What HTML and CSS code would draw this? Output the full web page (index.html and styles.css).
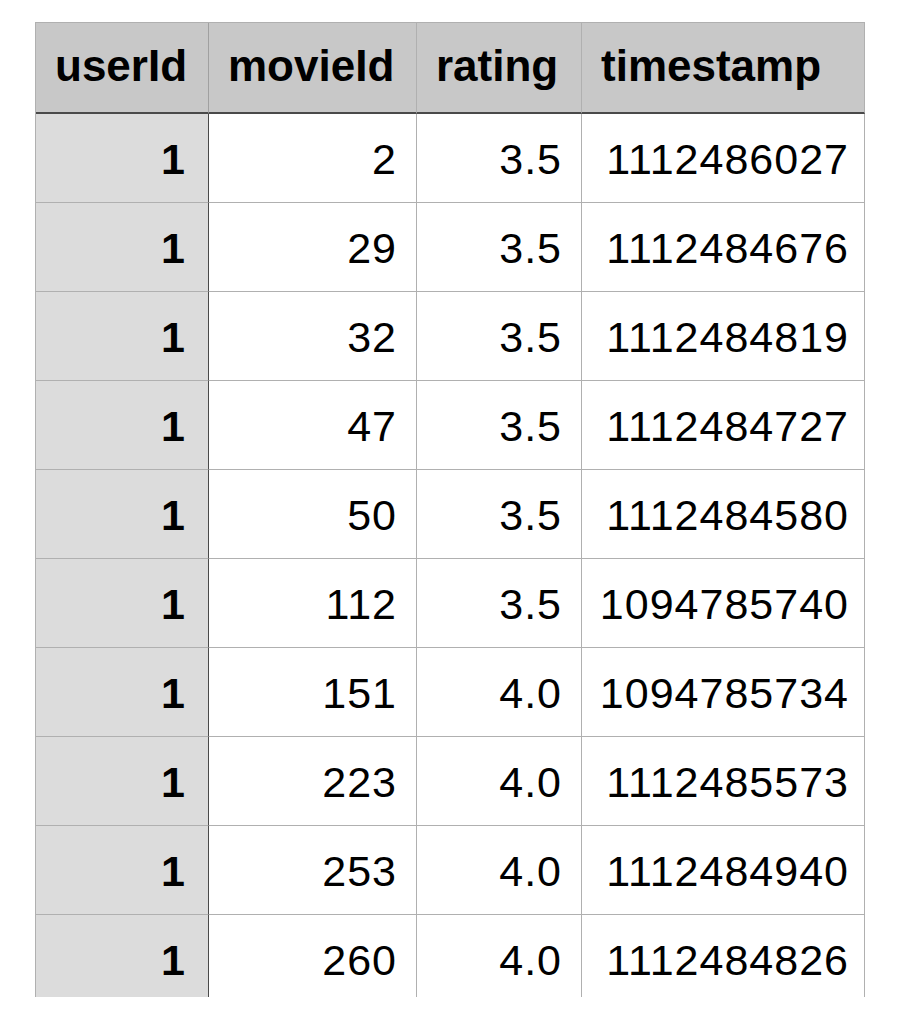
FILE: index.html
```html
<!DOCTYPE html>
<html>
<head>
<meta charset="utf-8">
<link rel="stylesheet" href="styles.css">
</head>
<body>
<div class="frame">
  <div class="grid">
    <div class="cell head key">userId</div>
    <div class="cell head">movieId</div>
    <div class="cell head">rating</div>
    <div class="cell head last">timestamp</div>

    <div class="cell key">1</div><div class="cell">2</div><div class="cell">3.5</div><div class="cell last">1112486027</div>
    <div class="cell key">1</div><div class="cell">29</div><div class="cell">3.5</div><div class="cell last">1112484676</div>
    <div class="cell key">1</div><div class="cell">32</div><div class="cell">3.5</div><div class="cell last">1112484819</div>
    <div class="cell key">1</div><div class="cell">47</div><div class="cell">3.5</div><div class="cell last">1112484727</div>
    <div class="cell key">1</div><div class="cell">50</div><div class="cell">3.5</div><div class="cell last">1112484580</div>
    <div class="cell key">1</div><div class="cell">112</div><div class="cell">3.5</div><div class="cell last">1094785740</div>
    <div class="cell key">1</div><div class="cell">151</div><div class="cell">4.0</div><div class="cell last">1094785734</div>
    <div class="cell key">1</div><div class="cell">223</div><div class="cell">4.0</div><div class="cell last">1112485573</div>
    <div class="cell key">1</div><div class="cell">253</div><div class="cell">4.0</div><div class="cell last">1112484940</div>
    <div class="cell key">1</div><div class="cell">260</div><div class="cell">4.0</div><div class="cell last">1112484826</div>
  </div>
</div>
</body>
</html>
```
FILE: styles.css
```css
html, body {
  margin: 0;
  padding: 0;
  background: #ffffff;
}
body {
  padding: 22px 0 0 35px;
  font-family: "Liberation Sans", Arial, sans-serif;
  color: #000;
}
.frame {
  width: 830px;
  height: 975px;
  overflow: hidden;
}
.grid {
  display: grid;
  grid-template-columns: 173px 208px 165px 283px;
  grid-template-rows: 91px;
  grid-auto-rows: 89px;
  border-left: 1px solid #b0b0b0;
  border-top: 1px solid #b0b0b0;
  width: 829px;
}
.cell {
  box-sizing: border-box;
  border-right: 1px solid #b0b0b0;
  border-bottom: 1px solid #b0b0b0;
  font-size: 43px;
  letter-spacing: 1px;
  display: flex;
  align-items: center;
  justify-content: flex-end;
  padding: 2px 19px 0 20px;
  background: #ffffff;
}
.cell.key {
  background: #dcdcdc;
  font-weight: bold;
  letter-spacing: 0;
  border-right: 1px solid #4a4a4a;
  padding-right: 23px;
}
.cell.last {
  padding-right: 15px;
}
.cell.head {
  background: #c8c8c8;
  font-weight: bold;
  font-size: 44px;
  letter-spacing: 0;
  justify-content: flex-start;
  padding: 0 10px 4px 19px;
  border-bottom: 2px solid #4a4a4a;
}
.cell.head.key {
  border-right: 1px solid #a0a0a0;
}
```
